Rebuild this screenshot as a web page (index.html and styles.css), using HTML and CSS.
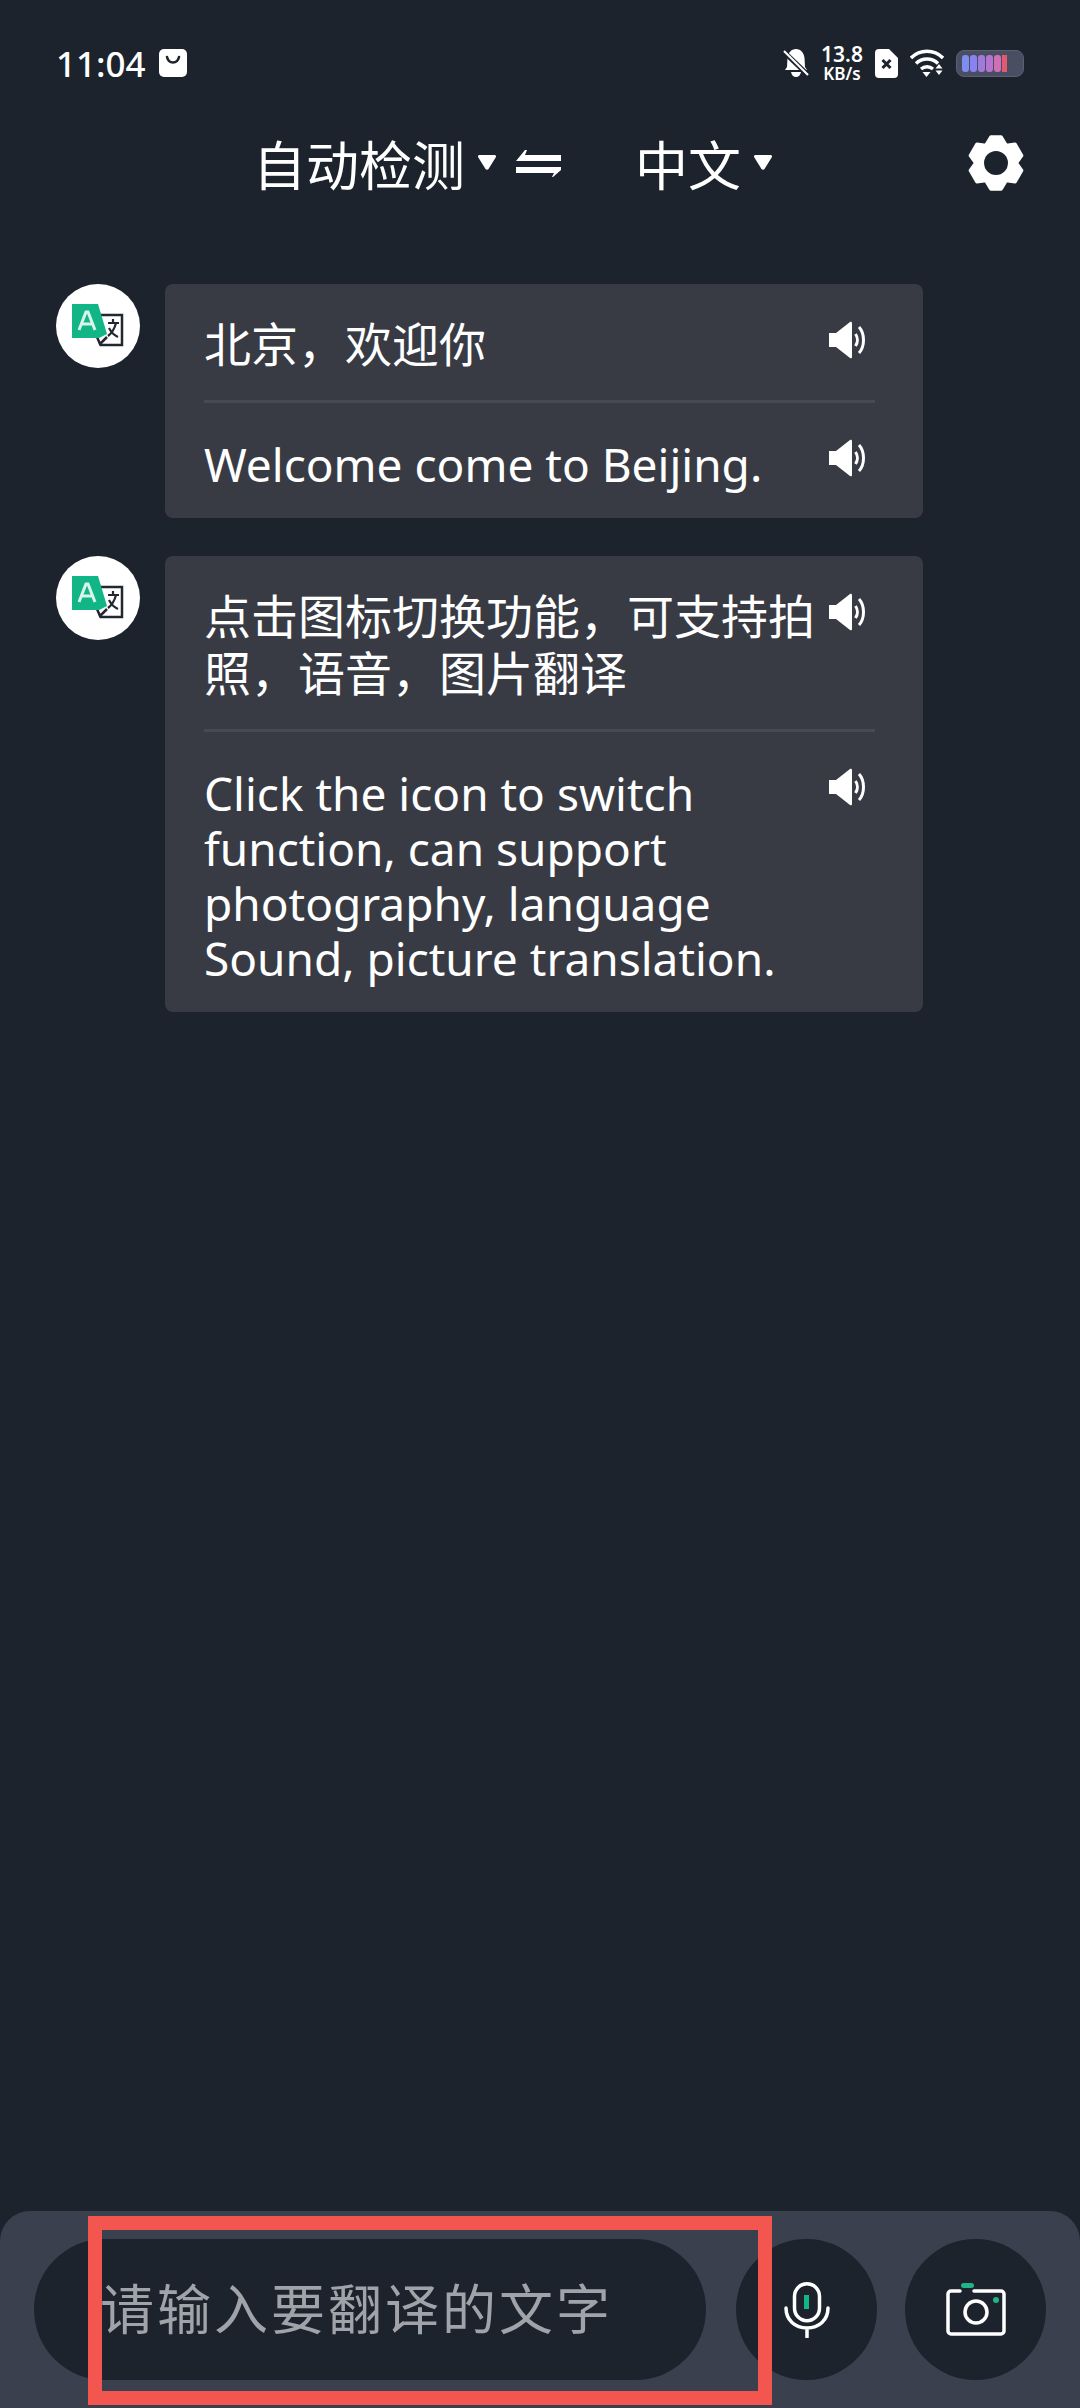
FILE: index.html
```html
<!DOCTYPE html>
<html lang="zh-CN">
<head>
    <meta charset="UTF-8">
    <title>翻译</title>
    <link rel="stylesheet" href="styles.css">
</head>
<body>

<div class="screen">
    <div class="status-bar">
        <div class="status-left">
            <span class="time">11:04</span>
            <svg class="bag-icon" width="28" height="28" viewBox="0 0 28 28"><path d="M5 0h18a5 5 0 0 1 5 5v18a5 5 0 0 1-5 5H5a5 5 0 0 1-5-5V5a5 5 0 0 1 5-5z" fill="#fff"/><path d="M8 8c1 4 3 5.500 6 5.500s5-1.500 6-5.500" fill="none" stroke="#1d232c" stroke-width="2.600" stroke-linecap="round"/></svg>
        </div>
        <div class="status-right">
            <svg width="26" height="30" viewBox="0 0 26 30"><path d="M13 1c5 0 8 4 8.500 9l.5 9 2 3H2l2-3 .5-9C5 5 8 1 13 1z" fill="#fff"/><path d="M8 24h10c-.5 3-2.500 5-5 5s-4.500-2-5-5z" fill="#fff"/><path d="M0 3l26 25" stroke="#1d232c" stroke-width="5"/><path d="M1 3l24 24" stroke="#fff" stroke-width="2.200"/></svg>
            <div class="net-speed"><span class="net-value">13.8</span><span class="net-unit">KB/s</span></div>
            <svg width="23" height="29" viewBox="0 0 23 29"><path d="M4 0h10l9 9v16a4 4 0 0 1-4 4H4a4 4 0 0 1-4-4V4a4 4 0 0 1 4-4z" fill="#fff"/><path d="M7.500 11l8 8M15.500 11l-8 8" stroke="#1d232c" stroke-width="3"/></svg>
            <svg width="34" height="28" viewBox="0 0 34 28"><g fill="none" stroke="#fff" stroke-width="3.400"><path d="M1 9c9-9 23-9 32 0"/><path d="M6 14.500c6-6 16-6 22 0"/><path d="M11 20c3.500-3 8.500-3 12 0"/></g><path d="M12.500 23h8l-4 5z" fill="#fff"/><path d="M29 15l3.500 4.500h-7zM25.500 21.500h7l-3.500 4.500z" fill="#fff"/></svg>
            <div class="battery">
                <span class="cell" style="background:#7f8cf0"></span>
                <span class="cell" style="background:#8a82ee"></span>
                <span class="cell" style="background:#a07ad8"></span>
                <span class="cell" style="background:#b574cf"></span>
                <span class="cell" style="background:#d06fb4"></span>
                <span class="cell cell-last"></span>
            </div>
        </div>
    </div>

    <div class="top-bar">
        <div class="lang">
            <span class="lang-name">自动检测</span>
            <svg class="caret" width="18" height="15" viewBox="0 0 18 15"><path d="M1.500 0h15c1.300 0 2 1.200 1.300 2.200L10.500 14c-.7 1-2.300 1-3 0L.2 2.200C-.5 1.200.2 0 1.500 0z" fill="#fff"/></svg>
        </div>
        <svg class="swap" width="46" height="27" viewBox="0 0 46 27"><path d="M0 11L9 0h2L9 5h36v6z" fill="#fff"/><path d="M0 17h45v3l-8 7h-1l2-4H0z" fill="#fff"/></svg>
        <div class="lang lang-target">
            <span class="lang-name">中文</span>
            <svg class="caret" width="18" height="15" viewBox="0 0 18 15"><path d="M1.500 0h15c1.300 0 2 1.200 1.300 2.200L10.500 14c-.7 1-2.300 1-3 0L.2 2.200C-.5 1.200.2 0 1.500 0z" fill="#fff"/></svg>
        </div>
        <svg class="gear" width="56" height="56" viewBox="1 1 22 22"><path fill="#fff" stroke="#fff" stroke-width="1.300" stroke-linejoin="round" d="M14 1.700L16 5.070 19.500 4.600 22.100 9.100 20 12 22.100 14.900 19.500 19.400 16 18.930 14 22.300H10L8 18.930 4.500 19.400 1.900 14.900 4 12 1.900 9.100 4.500 4.600 8 5.070 10 1.700z"/><circle cx="12" cy="12" r="4.700" fill="#1d232c"/></svg>
    </div>

    <div class="chat">
        <div class="chat-row">
            <svg class="avatar" width="84" height="84" viewBox="0 0 84 84"><circle cx="42" cy="42" r="42" fill="#fff"/><path d="M42 31h24v30H44" fill="none" stroke="#23272f" stroke-width="2.500"/><path d="M52 39h11M57 35v4M60 39c-1.500 6-4 10-8 13M53 44c2 4 4.500 7 9 9" fill="none" stroke="#23272f" stroke-width="2.200"/><path d="M41 53l3 7 7-7" fill="none" stroke="#23272f" stroke-width="2.500"/><path d="M16 20h26l9 30-8 4H16z" fill="#12b585"/><path d="M23 46l7-18h2l7 18M26 40h10" fill="none" stroke="#d8f5ec" stroke-width="3"/></svg>
            <div class="bubble">
                <div class="bubble-part">
                    <p class="zh">北京，欢迎你</p>
                    <svg class="speaker" width="40" height="40" viewBox="0 0 40 40"><path d="M1 13h7L22 2c1-.8 2 0 2 1v34c0 1-1 1.800-2 1L8 27H1z" fill="#fff"/><path d="M27.500 14c2.500 3.500 2.500 8.500 0 12" fill="none" stroke="#fff" stroke-width="3"/><path d="M31 7c6 6.500 6 19.500 0 26" fill="none" stroke="#fff" stroke-width="3"/></svg>
                </div>
                <div class="bubble-part part-en">
                    <p class="en">Welcome come to Beijing.</p>
                    <svg class="speaker" width="40" height="40" viewBox="0 0 40 40"><path d="M1 13h7L22 2c1-.8 2 0 2 1v34c0 1-1 1.800-2 1L8 27H1z" fill="#fff"/><path d="M27.500 14c2.500 3.500 2.500 8.500 0 12" fill="none" stroke="#fff" stroke-width="3"/><path d="M31 7c6 6.500 6 19.500 0 26" fill="none" stroke="#fff" stroke-width="3"/></svg>
                </div>
            </div>
        </div>

        <div class="chat-row">
            <svg class="avatar" width="84" height="84" viewBox="0 0 84 84"><circle cx="42" cy="42" r="42" fill="#fff"/><path d="M42 31h24v30H44" fill="none" stroke="#23272f" stroke-width="2.500"/><path d="M52 39h11M57 35v4M60 39c-1.500 6-4 10-8 13M53 44c2 4 4.500 7 9 9" fill="none" stroke="#23272f" stroke-width="2.200"/><path d="M41 53l3 7 7-7" fill="none" stroke="#23272f" stroke-width="2.500"/><path d="M16 20h26l9 30-8 4H16z" fill="#12b585"/><path d="M23 46l7-18h2l7 18M26 40h10" fill="none" stroke="#d8f5ec" stroke-width="3"/></svg>
            <div class="bubble">
                <div class="bubble-part">
                    <p class="zh">点击图标切换功能，可支持拍照，语音，图片翻译</p>
                    <svg class="speaker" width="40" height="40" viewBox="0 0 40 40"><path d="M1 13h7L22 2c1-.8 2 0 2 1v34c0 1-1 1.800-2 1L8 27H1z" fill="#fff"/><path d="M27.500 14c2.500 3.500 2.500 8.500 0 12" fill="none" stroke="#fff" stroke-width="3"/><path d="M31 7c6 6.500 6 19.500 0 26" fill="none" stroke="#fff" stroke-width="3"/></svg>
                </div>
                <div class="bubble-part part-en">
                    <p class="en">Click the icon to switch function, can support photography, language Sound, picture translation.</p>
                    <svg class="speaker" width="40" height="40" viewBox="0 0 40 40"><path d="M1 13h7L22 2c1-.8 2 0 2 1v34c0 1-1 1.800-2 1L8 27H1z" fill="#fff"/><path d="M27.500 14c2.500 3.500 2.500 8.500 0 12" fill="none" stroke="#fff" stroke-width="3"/><path d="M31 7c6 6.500 6 19.500 0 26" fill="none" stroke="#fff" stroke-width="3"/></svg>
                </div>
            </div>
        </div>
    </div>

    <div class="bottom-bar">
        <div class="text-input">请输入要翻译的文字</div>
        <button class="round-btn">
            <svg width="46" height="56" viewBox="0 0 46 56"><rect x="10.500" y="1.750" width="25" height="37" rx="12.500" fill="none" stroke="#fff" stroke-width="3.500"/><rect x="20" y="13" width="5" height="14" fill="#12b585"/><path d="M2 26c0 12 9 20 21 20s21-8 21-20M23 46v9" fill="none" stroke="#fff" stroke-width="3.500" stroke-linecap="round"/></svg>
        </button>
        <button class="round-btn">
            <svg width="60" height="54" viewBox="0 0 60 54"><path d="M14 8H5a3 3 0 0 0-3 3v37a3 3 0 0 0 3 3h50a3 3 0 0 0 3-3V11a3 3 0 0 0-3-3H28" fill="none" stroke="#fff" stroke-width="3.500" stroke-linecap="round"/><circle cx="30" cy="29" r="11" fill="none" stroke="#fff" stroke-width="3.500"/><rect x="15" y="0" width="13" height="5" rx="2.500" fill="#1fb586"/><circle cx="50" cy="17" r="3" fill="#1fb586"/></svg>
        </button>
    </div>

    <div class="highlight"></div>
</div>

</body>
</html>
```

FILE: styles.css
```css
* {
    box-sizing: border-box;
}
body {
    margin: 0;
    background-color: #1d232c;
    color: #fff;
    font-family: "Noto Sans", "Noto Sans CJK SC", sans-serif;
}
p {
    margin: 0;
}
.screen {
    position: relative;
    display: flex;
    flex-direction: column;
    width: 1080px;
    height: 2408px;
    overflow: hidden;
}

/* status bar */
.status-bar {
    display: flex;
    justify-content: space-between;
    align-items: center;
    height: 126px;
    padding: 0 56px;
}
.status-left {
    display: flex;
    align-items: center;
    gap: 13px;
}
.time {
    font-size: 35px;
    font-weight: 500;
    line-height: 1;
}
.status-right {
    display: flex;
    align-items: center;
    gap: 12px;
}
.net-speed {
    display: flex;
    flex-direction: column;
    align-items: center;
    gap: 2px;
    width: 42px;
    font-weight: 600;
}
.net-value {
    font-size: 21px;
    line-height: 19px;
}
.net-unit {
    font-size: 17px;
    line-height: 16px;
}
.battery {
    display: flex;
    gap: 1px;
    width: 68px;
    height: 27px;
    padding: 4px 5px;
    border-radius: 8px;
    background-color: #4a4e63;
    border: 1px solid #5b5f72;
}
.cell {
    width: 7px;
    border-radius: 3px;
}
.cell-last {
    width: 5px;
    border-radius: 0;
    background-color: #e05a70;
}

/* language switch */
.top-bar {
    display: flex;
    align-items: center;
    height: 76px;
    margin-top: 2px;
    padding-left: 253px;
}
.lang {
    display: flex;
    align-items: center;
    gap: 13px;
}
.lang-name {
    font-size: 53px;
    line-height: 76px;
}
.caret {
    margin-top: -7px;
}
.swap {
    margin-left: 20px;
    margin-top: -5px;
}
.lang-target {
    margin-left: 73px;
}
.gear {
    margin-left: auto;
    margin-right: 56px;
    margin-top: -6px;
}

/* messages */
.chat {
    flex: 1;
    display: flex;
    flex-direction: column;
    gap: 38px;
    padding: 80px 0 0 56px;
}
.chat-row {
    display: flex;
    align-items: flex-start;
    gap: 25px;
}
.avatar {
    flex-shrink: 0;
}
.bubble {
    width: 758px;
    padding: 0 48px 0 39px;
    background-color: #383b44;
    border-radius: 8px;
}
.bubble-part {
    display: flex;
    justify-content: space-between;
    align-items: flex-start;
    padding: 32px 7px 27px 0;
}
.part-en {
    border-top: 3px solid #474a52;
    padding-top: 34px;
    padding-bottom: 26px;
}
.speaker {
    flex-shrink: 0;
    margin-top: 4px;
}
.part-en .speaker {
    margin-top: 1px;
}
.zh {
    font-size: 47px;
    line-height: 57px;
    width: 620px;
}
.en {
    font-size: 46px;
    line-height: 55px;
    width: 610px;
}

/* input row */
.bottom-bar {
    display: flex;
    align-items: center;
    height: 197px;
    padding: 0 34px;
    background-color: #3a404d;
    border-radius: 30px 30px 0 0;
}
.text-input {
    width: 672px;
    height: 141px;
    padding-left: 66px;
    border-radius: 71px;
    background-color: #1d232c;
    color: #a0a4aa;
    font-size: 54px;
    letter-spacing: 3px;
    line-height: 141px;
}
.round-btn {
    display: flex;
    align-items: center;
    justify-content: center;
    width: 141px;
    height: 141px;
    margin-left: 28px;
    padding: 0;
    border: none;
    border-radius: 50%;
    background-color: #1d232c;
}
.text-input + .round-btn {
    margin-left: 30px;
}
.highlight {
    position: absolute;
    left: 88px;
    top: 2216px;
    width: 684px;
    height: 189px;
    border: 14px solid #f2564f;
}
```
